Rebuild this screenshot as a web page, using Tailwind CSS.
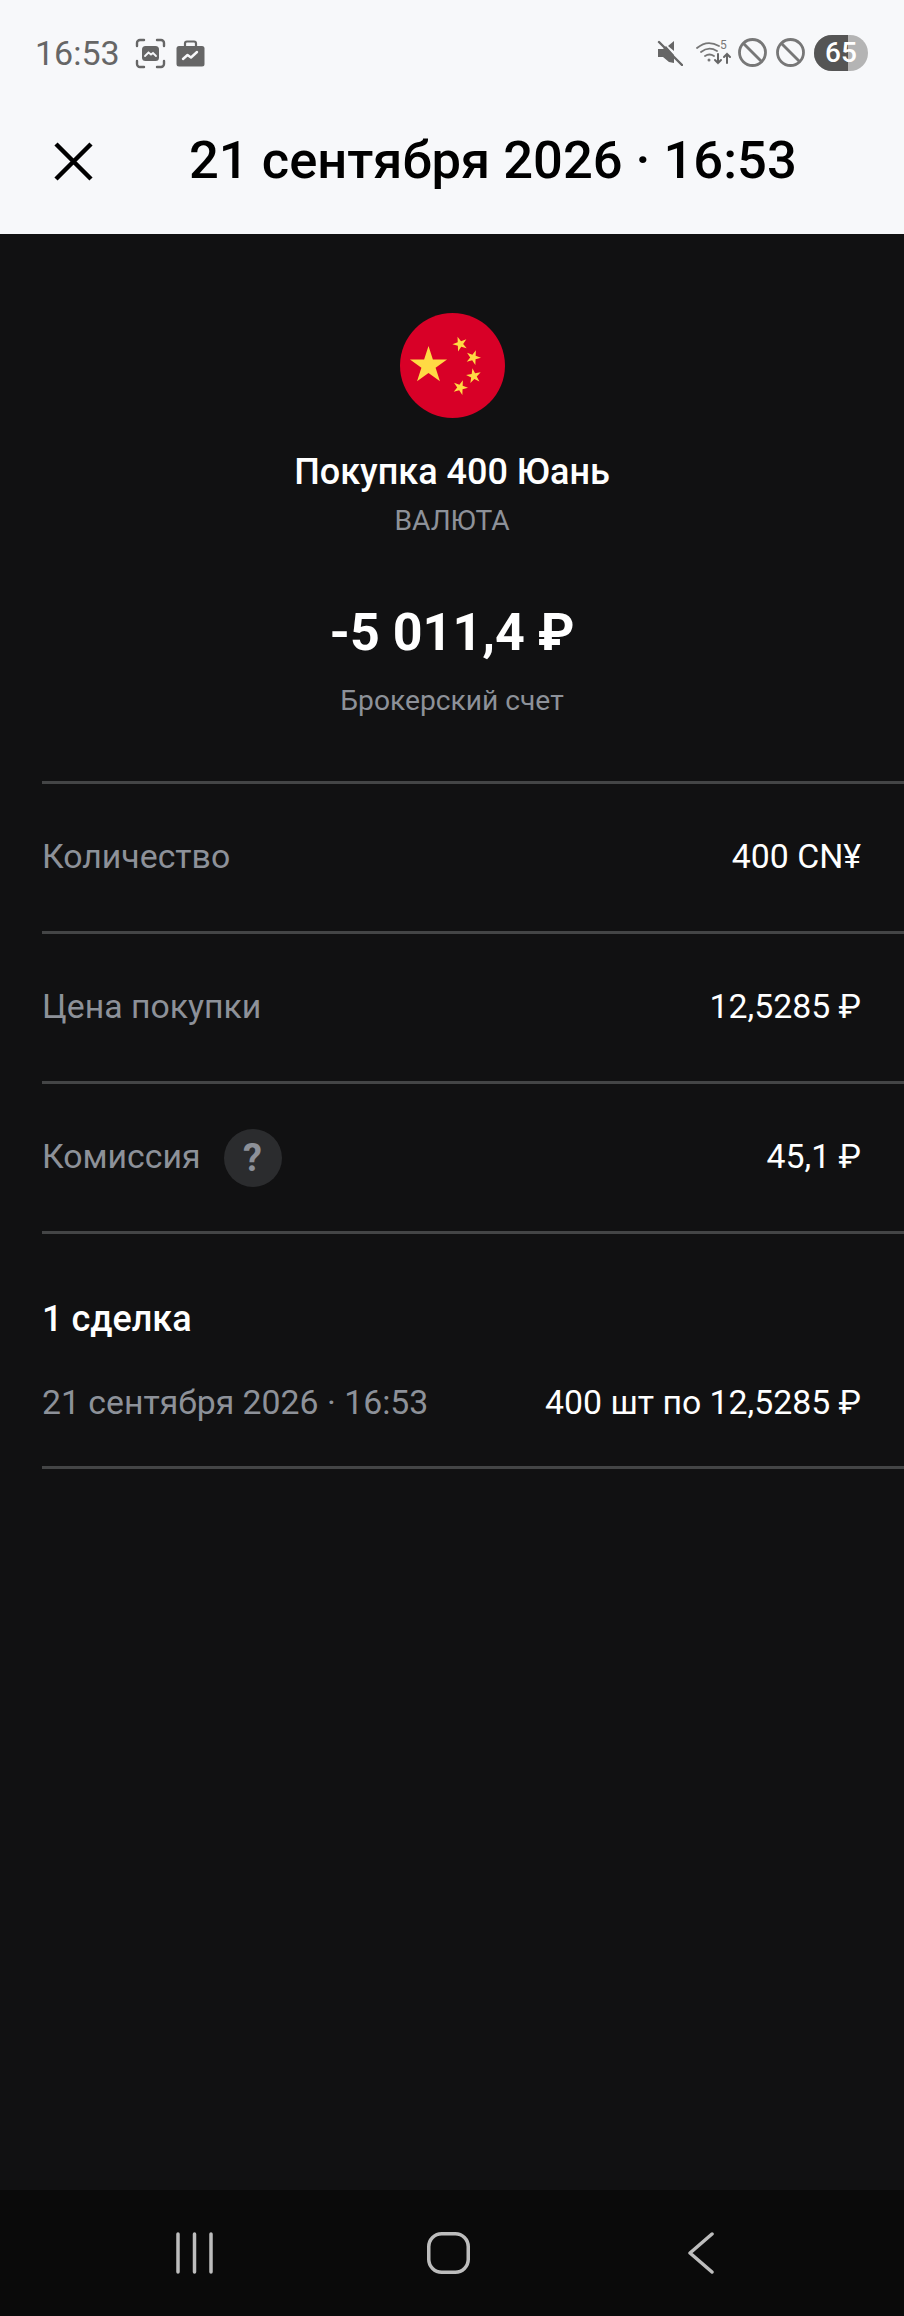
<!DOCTYPE html>
<html lang="ru">

<head>
  <meta charset="UTF-8">
  <meta name="viewport" content="width=device-width, initial-scale=1.0">
  <title>Операция</title>
  <script src="https://cdn.jsdelivr.net/npm/@tailwindcss/browser@4"></script>
</head>

<body class="bg-[#111112] font-['Roboto',sans-serif] w-[904px] h-[2316px] overflow-hidden flex flex-col">

  <!-- Status bar + title -->
  <header class="bg-[#f7f8fa] h-[234px] shrink-0">
    <div class="h-[106px] flex items-center justify-between pl-[35px] pr-[36px] text-[#666666]">
      <div class="flex items-center">
        <span class="text-[34px] leading-none">16:53</span>
        <svg class="ml-[15px]" width="31" height="31" viewBox="0 0 31 31" fill="none" stroke="#666" stroke-width="2.4" stroke-linecap="round">
          <path d="M2 8V5a3 3 0 0 1 3-3h4M22 2h4a3 3 0 0 1 3 3v3M29 23v3a3 3 0 0 1-3 3h-4M9 29H5a3 3 0 0 1-3-3v-3" />
          <rect x="7" y="8" width="17" height="15" rx="3.5" fill="#666" stroke="none" />
          <path d="M10 18l3.500-3.500 2.500 2 2-1.500 3 3" stroke="#f7f8fa" stroke-width="1.800" fill="none" />
        </svg>
        <svg class="ml-[10px]" width="29" height="27" viewBox="0 0 29 27" fill="none">
          <path d="M9 6V3.500a2 2 0 0 1 2-2h7a2 2 0 0 1 2 2V6" stroke="#666" stroke-width="2.200" />
          <rect x="0.500" y="6" width="28" height="20.500" rx="2.500" fill="#666" />
          <path d="M7 19l4.500-4 3.500 2.500 6-5.500" stroke="#f7f8fa" stroke-width="2.400" stroke-linecap="round" stroke-linejoin="round" />
        </svg>
      </div>
      <div class="flex items-center -mt-[1px]">
        <svg width="26" height="26" viewBox="0 0 26 26" fill="#666">
          <path d="M1 9h5l3-3 8 9v8l-5-1-6-5H1z" />
          <path d="M11 6l6-5v10z" />
          <path d="M2 2l23 23" stroke="#666" stroke-width="2.400" stroke-linecap="round" />
        </svg>
        <svg class="ml-[13px]" width="36" height="27" viewBox="0 0 36 27" fill="none" stroke="#777" stroke-width="1.800" stroke-linecap="round">
          <path d="M1 9c7-6 15-6 22-2M5 13c5-4 11-4 16-1M9 17c3-2 6-2 9 0" />
          <circle cx="13" cy="21" r="1.500" fill="#777" stroke="none" />
          <path d="M22 15v9M19 21l3 3 3-3M31 24v-9M28 18l3-3 3 3" stroke="#666" stroke-width="2" />
          <text x="24" y="10" font-size="12" font-family="Roboto" fill="#777" stroke="none">5</text>
        </svg>
        <svg class="ml-[6px]" width="29" height="29" viewBox="0 0 29 29" fill="none" stroke="#777" stroke-width="2.800">
          <circle cx="14.500" cy="14.500" r="13" />
          <path d="M5.500 5.500l18 18" />
        </svg>
        <svg class="ml-[9px]" width="29" height="29" viewBox="0 0 29 29" fill="none" stroke="#777" stroke-width="2.800">
          <circle cx="14.500" cy="14.500" r="13" />
          <path d="M5.500 5.500l18 18" />
        </svg>
        <div class="ml-[9px] relative w-[54px] h-[36px] rounded-full overflow-hidden bg-[#b4b4b4] flex">
          <div class="w-[34px] bg-[#555555]"></div>
          <span class="absolute inset-0 flex items-center justify-center text-white text-[28px] font-medium leading-none">65</span>
        </div>
      </div>
    </div>
    <div class="h-[128px] flex items-start">
      <svg class="ml-[53px] mt-[35px]" width="41" height="41" viewBox="0 0 41 41" fill="none" stroke="#000" stroke-width="4.500">
        <path d="M3 3l35 35M38 3L3 38" />
      </svg>
      <h1 class="ml-[95px] pt-[22px] text-[52.500px] leading-[64px] text-black font-medium whitespace-nowrap">21 сентября 2026 · 16:53</h1>
    </div>
  </header>

  <main class="flex-1 flex flex-col">
    <!-- Summary -->
    <section class="flex flex-col items-center text-center pt-[79px] h-[547px] shrink-0">
      <svg width="105" height="105" viewBox="0 0 105 105">
        <defs>
          <polygon id="star" fill="#ffda44" points="0,-19.500 4.380,-6.030 18.550,-6.030 7.090,2.300 11.460,15.780 0,7.450 -11.460,15.780 -7.090,2.300 -18.550,-6.030 -4.380,-6.030" />
        </defs>
        <circle cx="52.500" cy="52.500" r="52.500" fill="#d80027" />
        <use href="#star" transform="translate(28.500 52.500)" />
        <use href="#star" transform="translate(60.200 31) rotate(-20) scale(0.4)" />
        <use href="#star" transform="translate(73.200 44.500) rotate(20) scale(0.4)" />
        <use href="#star" transform="translate(73.800 63) rotate(-10) scale(0.4)" />
        <use href="#star" transform="translate(60.200 74.500) rotate(20) scale(0.4)" />
      </svg>
      <h2 class="mt-[32px] text-[36px] leading-[44px] font-medium text-white">Покупка 400 Юань</h2>
      <p class="mt-[9px] text-[28.200px] leading-[36px] text-[#8d9199]">ВАЛЮТА</p>
      <p class="mt-[64px] text-[52px] leading-[60px] font-bold text-white">-5 011,4 ₽</p>
      <p class="mt-[20px] text-[28.200px] leading-[36px] text-[#8d9199]">Брокерский счет</p>
    </section>

    <!-- Rows -->
    <div class="ml-[42px]">
      <div class="border-t-[3px] border-[#444546] h-[150px] flex items-center justify-between pr-[43px] text-[33.800px]">
        <span class="text-[#8d9199]">Количество</span>
        <span class="text-white">400 CN¥</span>
      </div>
      <div class="border-t-[3px] border-[#444546] h-[150px] flex items-center justify-between pr-[43px] text-[33.800px]">
        <span class="text-[#8d9199]">Цена покупки</span>
        <span class="text-white">12,5285 ₽</span>
      </div>
      <div class="border-t-[3px] border-[#444546] h-[150px] flex items-center justify-between pr-[43px] text-[33.800px]">
        <span class="flex items-center text-[#8d9199]">Комиссия
          <span class="ml-[23px] w-[58px] h-[58px] rounded-full bg-[#2b2c2e] flex items-center justify-center font-bold text-[38px] leading-none text-[#8d9199]">?</span>
        </span>
        <span class="text-white">45,1 ₽</span>
      </div>
      <div class="border-t-[3px] border-[#444546] h-[235px] pr-[43px] text-[33.800px]">
        <h3 class="mt-[63px] text-[36px] leading-[44px] font-medium text-white">1 сделка</h3>
        <div class="mt-[37px] flex items-center justify-between">
          <span class="text-[#8d9199]">21 сентября 2026 · 16:53</span>
          <span class="text-white">400 шт по 12,5285 ₽</span>
        </div>
      </div>
      <div class="border-t-[3px] border-[#444546]"></div>
    </div>
  </main>

  <!-- Navigation bar -->
  <nav class="bg-[#0a0a0a] h-[126px] shrink-0 flex items-center pl-[175px]">
    <svg width="38" height="42" viewBox="0 0 38 42" fill="none" stroke="#bdbdbd" stroke-width="3.500" stroke-linecap="round">
      <path d="M3 2v38M19.500 2v38M36 2v38" />
    </svg>
    <svg class="ml-[214px]" width="43" height="42" viewBox="0 0 43 42" fill="none" stroke="#bdbdbd" stroke-width="3.500">
      <rect x="1.750" y="1.750" width="39.500" height="38.500" rx="13" />
    </svg>
    <svg class="ml-[218px]" width="26" height="42" viewBox="0 0 26 42" fill="none" stroke="#bdbdbd" stroke-width="3.500" stroke-linecap="round" stroke-linejoin="round">
      <path d="M24 2L2 21l22 19" />
    </svg>
  </nav>

</body>

</html>
